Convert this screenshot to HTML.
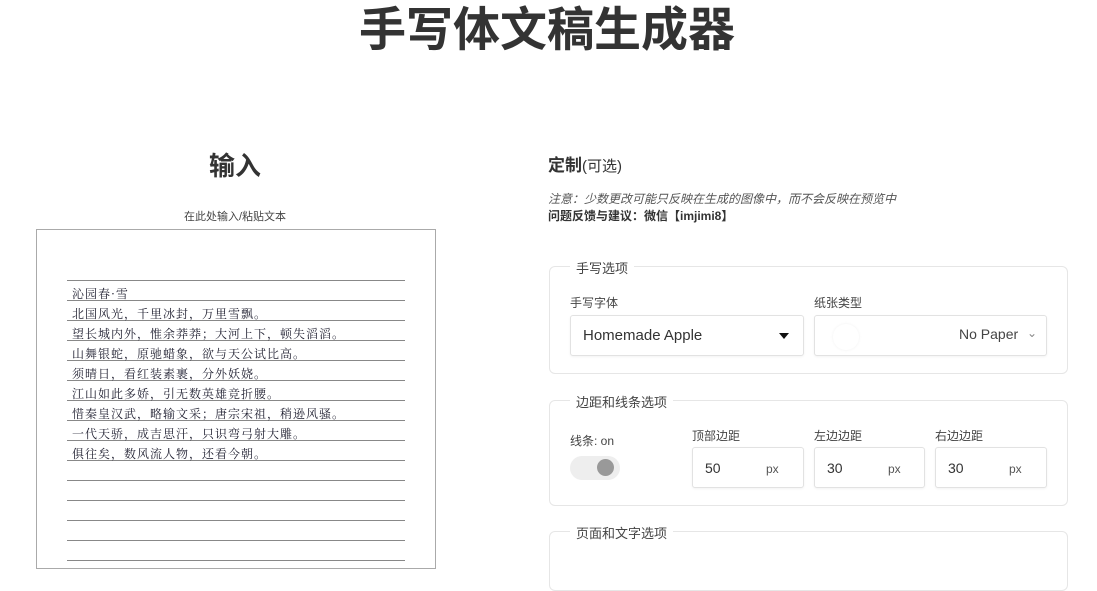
<!DOCTYPE html>
<html><head><meta charset="utf-8"><style>
*{margin:0;padding:0;box-sizing:border-box}
body{width:1097px;height:562px;overflow:hidden;background:#fff;font-family:"Liberation Sans","Noto Sans CJK SC",sans-serif;color:#333;position:relative}
.a{position:absolute;white-space:nowrap}
.fs{position:absolute;border:1px solid #e6e6e6;border-radius:6px;left:549px;width:519px}
.lg{position:absolute;background:#fff;padding:0 6px;font-size:13px;color:#444;left:20px;top:-9px}
.lab{font-size:12px;color:#444}
.box{position:absolute;border:1px solid #e2e2e2;border-radius:3px;background:#fff;box-shadow:0 1px 2px rgba(0,0,0,.05)}
.ln{position:absolute;left:67px;width:338px;height:1px;background:#888}
.hw{position:absolute;left:72px;font-size:12px;color:#223;font-family:"Noto Serif CJK SC",serif;letter-spacing:1px}
</style></head><body>
<div class="a" style="left:0;width:1094px;text-align:center;top:0;font-size:47px;font-weight:bold;color:#333;line-height:60px">手写体文稿生成器</div>
<div class="a" style="left:135px;width:200px;text-align:center;top:148px;font-size:26px;font-weight:bold;line-height:36px">输入</div>
<div class="a" style="left:135px;width:200px;text-align:center;top:208px;font-size:11px;color:#444">在此处输入/粘贴文本</div>
<div class="a" style="left:36px;top:229px;width:400px;height:340px;border:1px solid #aaa"></div>
<div class="ln" style="top:280px"></div><div class="ln" style="top:300px"></div><div class="ln" style="top:320px"></div><div class="ln" style="top:340px"></div><div class="ln" style="top:360px"></div><div class="ln" style="top:380px"></div><div class="ln" style="top:400px"></div><div class="ln" style="top:420px"></div><div class="ln" style="top:440px"></div><div class="ln" style="top:460px"></div><div class="ln" style="top:480px"></div><div class="ln" style="top:500px"></div><div class="ln" style="top:520px"></div><div class="ln" style="top:540px"></div><div class="ln" style="top:560px"></div>
<div class="hw" style="top:285px">沁园春·雪</div>
<div class="hw" style="top:305px">北国风光，千里冰封，万里雪飘。</div>
<div class="hw" style="top:325px">望长城内外，惟余莽莽；大河上下，顿失滔滔。</div>
<div class="hw" style="top:345px">山舞银蛇，原驰蜡象，欲与天公试比高。</div>
<div class="hw" style="top:365px">须晴日，看红装素裹，分外妖娆。</div>
<div class="hw" style="top:385px">江山如此多娇，引无数英雄竞折腰。</div>
<div class="hw" style="top:405px">惜秦皇汉武，略输文采；唐宗宋祖，稍逊风骚。</div>
<div class="hw" style="top:425px">一代天骄，成吉思汗，只识弯弓射大雕。</div>
<div class="hw" style="top:445px">俱往矣，数风流人物，还看今朝。</div>
<div class="a" style="left:548px;top:155px;font-size:17px;line-height:22px"><b>定制</b><span style="font-size:15px">(可选)</span></div>
<div class="a" style="left:548px;top:190px;font-size:12px;color:#555;font-style:italic">注意：少数更改可能只反映在生成的图像中，而不会反映在预览中</div>
<div class="a" style="left:548px;top:207px;font-size:12px;font-weight:bold;color:#333">问题反馈与建议：微信【imjimi8】</div>
<div class="fs" style="top:266px;height:108px"><div class="lg">手写选项</div></div>
<div class="a lab" style="left:570px;top:294px">手写字体</div>
<div class="a lab" style="left:814px;top:294px">纸张类型</div>
<div class="box" style="left:570px;top:315px;width:234px;height:41px"><span class="a" style="left:12px;top:11px;font-size:15px;color:#333">Homemade Apple</span><span class="a" style="left:208px;top:17px;width:0;height:0;border-left:5px solid transparent;border-right:5px solid transparent;border-top:6px solid #111"></span></div>
<div class="box" style="left:814px;top:315px;width:233px;height:41px"><span class="a" style="left:18px;top:8px;width:26px;height:26px;border-radius:50%;box-shadow:0 0 3px rgba(0,0,0,.06)"></span><span class="a" style="left:144px;top:10px;font-size:14px;color:#444">No Paper</span><span class="a" style="left:212px;top:10px;font-size:12px;color:#888">⌄</span></div>
<div class="fs" style="top:400px;height:106px"><div class="lg">边距和线条选项</div></div>
<div class="a lab" style="left:570px;top:432px">线条: <span style="font-family:'Liberation Sans'">on</span></div>
<div class="a" style="left:570px;top:456px;width:50px;height:24px;border-radius:12px;background:#eee"></div>
<div class="a" style="left:597px;top:459px;width:17px;height:17px;border-radius:50%;background:#999"></div>
<div class="a lab" style="left:692px;top:427px">顶部边距</div>
<div class="a lab" style="left:814px;top:427px">左边边距</div>
<div class="a lab" style="left:935px;top:427px">右边边距</div>
<div class="box" style="left:692px;top:447px;width:112px;height:41px"><span class="a" style="left:12px;top:12px;font-size:14px">50</span><span class="a" style="left:73px;top:14px;font-size:12px;color:#555">px</span></div>
<div class="box" style="left:814px;top:447px;width:111px;height:41px"><span class="a" style="left:12px;top:12px;font-size:14px">30</span><span class="a" style="left:73px;top:14px;font-size:12px;color:#555">px</span></div>
<div class="box" style="left:935px;top:447px;width:112px;height:41px"><span class="a" style="left:12px;top:12px;font-size:14px">30</span><span class="a" style="left:73px;top:14px;font-size:12px;color:#555">px</span></div>
<div class="fs" style="top:531px;height:60px"><div class="lg">页面和文字选项</div></div>
</body></html>
